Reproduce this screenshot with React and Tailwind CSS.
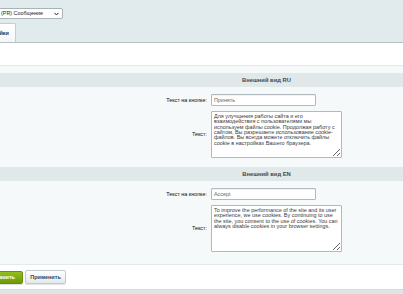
import React from "react";

const RU_TEXT =
  "Для улучшения работы сайта и его\nвзаимодействия с пользователями мы\nиспользуем файлы cookie. Продолжая работу с\nсайтом, Вы разрешаете использование cookie-\nфайлов. Вы всегда можете отключить файлы\ncookie в настройках Вашего браузера.";

const EN_TEXT =
  "To improve the performance of the site and its user\nexperience, we use cookies. By continuing to use\nthe site, you consent to the use of cookies. You can\nalways disable cookies in your browser settings.";

function Section({ title, button, text, last }) {
  return (
    <>
      <div className="flex h-[14px] items-center justify-center bg-[#e0e8ea] pr-[21px] text-[5.8px] font-bold text-[#3f4a50]">
        {title}
      </div>
      <div className={`grid grid-cols-[268px_1fr] gap-y-[5px] pt-[7px] ${last ? "pb-[12px]" : "pb-[9px]"}`}>
        <div className="self-center pr-[3px] text-right text-[5.4px] text-[#111]">Текст на кнопке:</div>
        <div className="pl-[1px]">
          <div className="flex h-[12px] w-[105px] items-center rounded-[1px] border border-[#b0babe] bg-white px-[2px] text-[5.4px] text-[#666] shadow-[inset_0_1px_1px_rgba(0,0,0,0.06)]">
            {button}
          </div>
        </div>
        <div className="self-center pr-[3px] text-right text-[5.4px] text-[#111]">Текст:</div>
        <div className="pl-[1px]">
          <textarea
            readOnly
            wrap="off"
            value={text}
            className="block h-[47px] w-[131px] overflow-hidden rounded-[1px] border border-[#b0babe] bg-white px-[2px] pt-[2px] text-[5.45px] leading-[5.35px] text-[#3a3a3a] outline-none"
          />
        </div>
      </div>
    </>
  );
}

export default function App() {
  return (
    <div className="h-[294px] w-[403px] overflow-hidden bg-white font-['Liberation_Sans',Arial,sans-serif]">
      <div className="flex h-[43px] flex-col border-b border-[#b7c0c3] bg-[#e1eaec]">
        <div className="-ml-[30px] mt-[8px] flex h-[11px] w-[93px] items-center justify-between rounded-[2px] border border-[#a9b4b8] bg-white pl-[30px] pr-[3px] text-[5.4px] text-[#222]">
          <span>(PR) Сообщение</span>
          <svg width="5" height="4" viewBox="0 0 5 4">
            <path d="M0.5 0.8 L2.5 3 L4.5 0.8" fill="none" stroke="#222" strokeWidth="1" />
          </svg>
        </div>
        <div className="-ml-[40px] mt-auto flex h-[19px] w-[56px] items-center justify-end rounded-t-[2px] border border-b-0 border-[#c5ced1] bg-gradient-to-b from-white to-[#f3f7f8] pr-[6px] text-[5.5px] font-bold text-[#2d3538]">
          Настройки
        </div>
      </div>

      <div className="h-[22px]" />

      <div className="border-y border-[#e3eaec] bg-[#f5f9f9] pt-[7px]">
        <div className="-ml-[58px] w-[670px]">
          <Section title="Внешний вид RU" button="Принять" text={RU_TEXT} />
          <Section title="Внешний вид EN" button="Accept" text={EN_TEXT} last />
        </div>
      </div>

      <div className="flex h-[24px] items-center gap-[2px]">
        <div className="-ml-[23px] flex h-[13px] w-[46px] items-center justify-end rounded-[2px] border border-[#6a8e0c] bg-gradient-to-b from-[#94bd1f] to-[#6f9a05] pr-[7px] text-[5.5px] font-bold text-white shadow-[0_1px_1px_rgba(0,0,0,0.15)]">
          Сохранить
        </div>
        <div className="flex h-[14px] w-[41px] items-center justify-center rounded-[2px] border border-[#c3cbce] bg-gradient-to-b from-white to-[#e3eaec] text-[5.5px] font-bold text-[#3c464c] shadow-[0_1px_1px_rgba(0,0,0,0.12)]">
          Применить
        </div>
      </div>

      <div className="h-[6px] border-t border-[#d4dcdf] bg-[#dde5e7]" />
    </div>
  );
}
